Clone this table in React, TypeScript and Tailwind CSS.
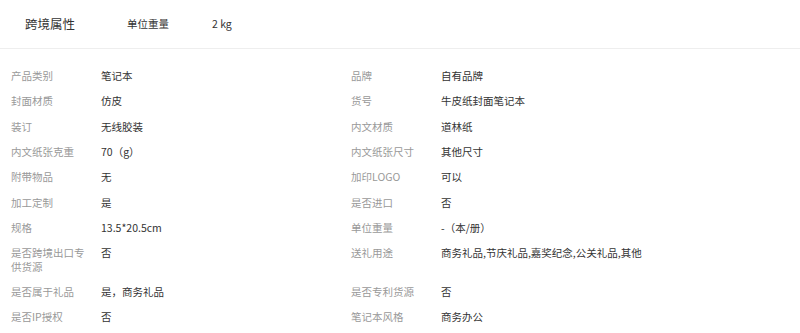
import React from "react";

const rows: [string, string, string, string][] = [
  ["产品类别", "笔记本", "品牌", "自有品牌"],
  ["封面材质", "仿皮", "货号", "牛皮纸封面笔记本"],
  ["装订", "无线胶装", "内文材质", "道林纸"],
  ["内文纸张克重", "70（g）", "内文纸张尺寸", "其他尺寸"],
  ["附带物品", "无", "加印LOGO", "可以"],
  ["加工定制", "是", "是否进口", "否"],
  ["规格", "13.5*20.5cm", "单位重量", "-（本/册）"],
  ["是否跨境出口专供货源", "否", "送礼用途", "商务礼品,节庆礼品,嘉奖纪念,公关礼品,其他"],
  ["是否属于礼品", "是，商务礼品", "是否专利货源", "否"],
  ["是否IP授权", "否", "笔记本风格", "商务办公"],
];

function Cell({ label, value }: { label: string; value: string }) {
  return (
    <div className="flex py-[6px] leading-[13.33px]">
      <div className="w-[90px] shrink-0 pr-[12px] text-[#999]">{label}</div>
      <div className="text-[#333]">{value}</div>
    </div>
  );
}

export default function App() {
  return (
    <div
      className="w-[800px] bg-white text-[10.5px]"
      style={{ fontFamily: '"Noto Sans CJK SC", "Noto Sans", sans-serif' }}
    >
      <div className="flex h-[49px] items-center border-b border-[#eee] text-[#333]">
        <div className="ml-[25px] w-[102px] text-[12.5px]">跨境属性</div>
        <div className="w-[85px]">单位重量</div>
        <div>2 kg</div>
      </div>
      <div className="grid grid-cols-[340px_340px] pl-[11px] pt-[14px]">
        {rows.map((r, i) => (
          <React.Fragment key={i}>
            <Cell label={r[0]} value={r[1]} />
            <Cell label={r[2]} value={r[3]} />
          </React.Fragment>
        ))}
      </div>
    </div>
  );
}
